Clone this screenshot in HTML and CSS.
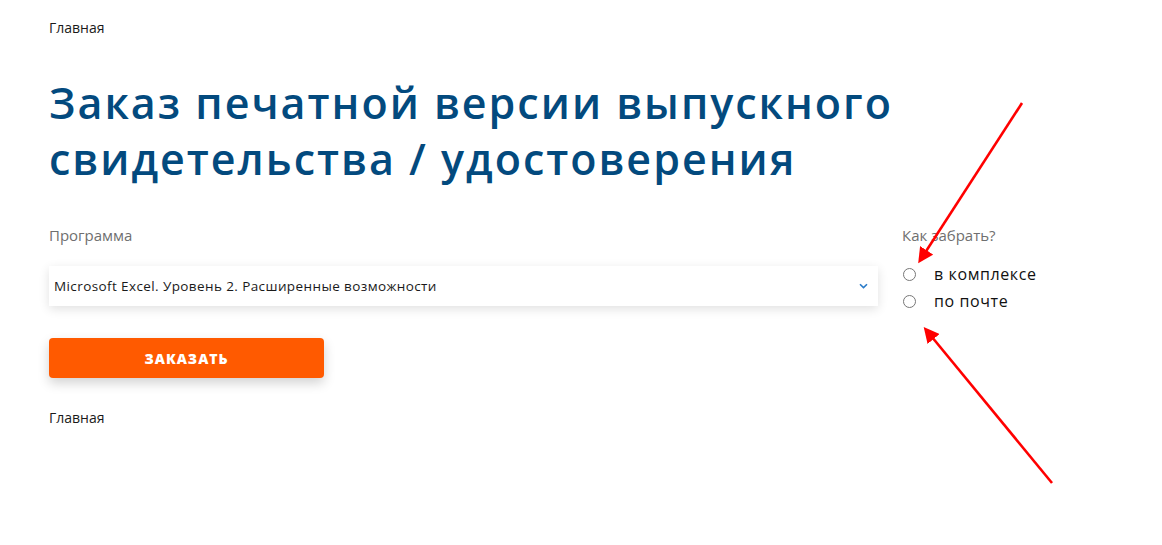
FILE: index.html
```html
<!DOCTYPE html>
<html lang="ru">
<head>
<meta charset="utf-8">
<title>Заказ печатной версии</title>
<link rel="stylesheet" href="styles.css">
</head>
<body>
<div class="page">
  <nav class="crumbs">Главная</nav>
  <h1 class="title">Заказ печатной версии выпускного<br>свидетельства / удостоверения</h1>
  <form class="order">
    <div class="col-main">
      <label class="label">Программа</label>
      <div class="select">
        <span class="select-text">Microsoft Excel. Уровень 2. Расширенные возможности</span>
        <svg class="chev" width="9" height="6" viewBox="0 0 9 6"><path d="M1 1.2 L4.5 4.6 L8 1.2" fill="none" stroke="#2b7cc9" stroke-width="1.6"/></svg>
      </div>
      <button type="button" class="btn">ЗАКАЗАТЬ</button>
    </div>
    <div class="col-side">
      <div class="label">Как забрать?</div>
      <div class="radios">
        <label class="radio"><span class="dot"></span>в комплексе</label>
        <label class="radio"><span class="dot"></span>по почте</label>
      </div>
    </div>
  </form>
  <nav class="crumbs bottom">Главная</nav>
</div>
<svg class="arrows" width="1162" height="545" viewBox="0 0 1162 545">
  <defs>
    <marker id="ah" markerWidth="6" markerHeight="6" refX="4" refY="3" orient="auto" markerUnits="strokeWidth">
      <path d="M0 0 L6 3 L0 6 Z" fill="#ff0000"/>
    </marker>
  </defs>
  <line x1="1022" y1="103" x2="921" y2="259" stroke="#ff0000" stroke-width="2.6" marker-end="url(#ah)"/>
  <line x1="1052" y1="483" x2="927" y2="331" stroke="#ff0000" stroke-width="2.6" marker-end="url(#ah)"/>
</svg>
</body>
</html>
```

FILE: styles.css
```css
html, body { margin: 0; padding: 0; background: #fff; }
body { font-family: "Open Sans", "Noto Sans", sans-serif; color: #111; }
.page { padding: 19px 0 0 49px; width: 1080px; }
.crumbs { font-size: 14px; line-height: 18px; color: #1a1a1a; }
.title {
  margin: 38px 0 0 0;
  font-size: 43px;
  line-height: 56px;
  font-weight: 600;
  color: #034a7e;
  letter-spacing: 2px;
}
.order { display: flex; gap: 24px; margin-top: 38px; }
.col-main { width: 829px; display: flex; flex-direction: column; align-items: flex-start; }
.label { font-size: 15px; line-height: 20px; color: #6f6f6f; display: block; }
.select {
  margin-top: 21px;
  width: 100%;
  height: 40px;
  box-sizing: border-box;
  padding: 0 10px 0 5px;
  display: flex;
  align-items: center;
  justify-content: space-between;
  background: #fff;
  box-shadow: 0 3px 10px rgba(0,0,0,0.12);
}
.select-text { font-size: 13.5px; color: #1a1a1a; letter-spacing: 0.4px; }
.btn {
  margin-top: 32px;
  width: 275px;
  height: 40px;
  border: 0;
  border-radius: 4px;
  background: #ff5a00;
  color: #fff;
  font-family: "Open Sans", sans-serif;
  font-size: 14px;
  font-weight: 800;
  letter-spacing: 1px;
  box-shadow: 0 5px 12px rgba(0,0,0,0.18);
}
.col-side { display: flex; flex-direction: column; }
.radios { margin-top: 19px; display: flex; flex-direction: column; gap: 7px; }
.radio { display: flex; align-items: center; font-size: 16px; line-height: 20px; color: #111; letter-spacing: 0.6px; }
.dot {
  width: 11px; height: 11px;
  border: 1px solid #777;
  border-radius: 50%;
  margin: 0 18px 0 1px;
  box-sizing: content-box;
  background: #fff;
}
.bottom { margin-top: 31px; }
.arrows { position: absolute; left: 0; top: 0; pointer-events: none; }
```
